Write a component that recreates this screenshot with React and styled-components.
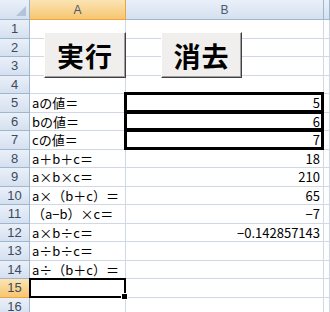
import React from 'react';
import styled, { createGlobalStyle, css } from 'styled-components';

const Global = createGlobalStyle`
  html, body { margin: 0; padding: 0; background: #fff; }
  body { font-family: "Noto Sans CJK JP", "DejaVu Sans", sans-serif; }
`;

const ROW_H = 18.5;

const Sheet = styled.div`
  position: relative;
  width: 330px;
  height: 312px;
  overflow: hidden;
  display: grid;
  grid-template-columns: 30px 96px 198px 1fr;
  grid-template-rows: 20px repeat(16, ${ROW_H}px);
  background: #fff;
`;

const headBg = css`
  background: linear-gradient(#eaf0f9, #d5e0f0);
  border-right: 1px solid #9eb6ce;
  border-bottom: 1px solid #9eb6ce;
`;

const activeBg = css`
  background: linear-gradient(#fbe4b4, #f6c672);
  border-right: 1px solid #f2a33a;
  border-bottom: 1px solid #f2a33a;
`;

const Corner = styled.div`
  ${headBg};
  position: relative;
  &::after {
    content: '';
    position: absolute;
    right: 3px;
    bottom: 3px;
    border-style: solid;
    border-width: 0 0 10px 10px;
    border-color: transparent transparent #b4c3d8 transparent;
  }
`;

const ColHead = styled.div`
  ${p => (p.$active ? activeBg : headBg)};
  display: flex;
  align-items: center;
  justify-content: center;
  font-family: "Liberation Sans", sans-serif;
  font-size: 12px;
  color: #4a5a70;
`;

const RowHead = styled.div`
  ${p => (p.$active ? activeBg : headBg)};
  border-bottom-color: ${p => (p.$active ? '#f2a33a' : '#9eb6ce')};
  display: flex;
  align-items: center;
  justify-content: center;
  font-family: "Liberation Sans", sans-serif;
  font-size: 13px;
  color: #3c4a5e;
`;

const Cell = styled.div`
  position: relative;
  border-right: 1px solid #d0d7e5;
  border-bottom: 1px solid #d0d7e5;
  display: flex;
  align-items: center;
  justify-content: ${p => (p.$right ? 'flex-end' : 'flex-start')};
  padding: 0 3px 0 2px;
  font-size: 13px;
  line-height: 1;
  color: #000;
  white-space: nowrap;
  ${p => p.$thick && css`
    &::after {
      content: '';
      position: absolute;
      left: -2px;
      top: -2px;
      right: -1px;
      bottom: -1px;
      border: 3px solid #000;
      pointer-events: none;
    }
  `}
  ${p => p.$selected && css`
    &::after {
      content: '';
      position: absolute;
      left: -1px;
      top: -1px;
      right: -1px;
      bottom: -1px;
      border: 2px solid #000;
    }
    &::before {
      content: '';
      position: absolute;
      right: -3px;
      bottom: -3px;
      width: 5px;
      height: 5px;
      background: #000;
      border: 1px solid #fff;
      z-index: 2;
    }
  `}
`;

const Button = styled.button`
  position: absolute;
  top: 32px;
  left: ${p => p.$left}px;
  width: ${p => p.$width}px;
  height: 46px;
  background: #f0efed;
  border: 1px solid;
  border-color: #fff #404040 #404040 #fff;
  box-shadow: inset -1px -1px 0 #a0a0a0;
  font-family: "Noto Sans CJK JP", sans-serif;
  font-weight: 700;
  font-size: 27px;
  letter-spacing: 1px;
  color: #000;
  padding: 0;
  display: flex;
  align-items: center;
  justify-content: center;
`;

const rows = [
  ['', ''],
  ['', ''],
  ['', ''],
  ['', ''],
  ['aの値＝', '5', true],
  ['bの値＝', '6', true],
  ['cの値＝', '7', true],
  ['a＋b＋c＝', '18'],
  ['a×b×c＝', '210'],
  ['a×（b＋c）＝', '65'],
  ['（a−b）×c＝', '−7'],
  ['a×b÷c＝', '−0.142857143'],
  ['a÷b÷c＝', ''],
  ['a÷（b＋c）＝', ''],
  ['', ''],
  ['', ''],
];

export default function App() {
  return (
    <>
      <Global />
      <Sheet>
        <Corner />
        <ColHead $active>A</ColHead>
        <ColHead>B</ColHead>
        <ColHead />
        {rows.map(([label, value, thick], i) => (
          <React.Fragment key={i}>
            <RowHead $active={i === 14}>{i + 1}</RowHead>
            <Cell $selected={i === 14}>{label}</Cell>
            <Cell $right $thick={thick}>{value}</Cell>
            <Cell />
          </React.Fragment>
        ))}
        <Button $left={44} $width={82}>実行</Button>
        <Button $left={161} $width={81}>消去</Button>
      </Sheet>
    </>
  );
}
